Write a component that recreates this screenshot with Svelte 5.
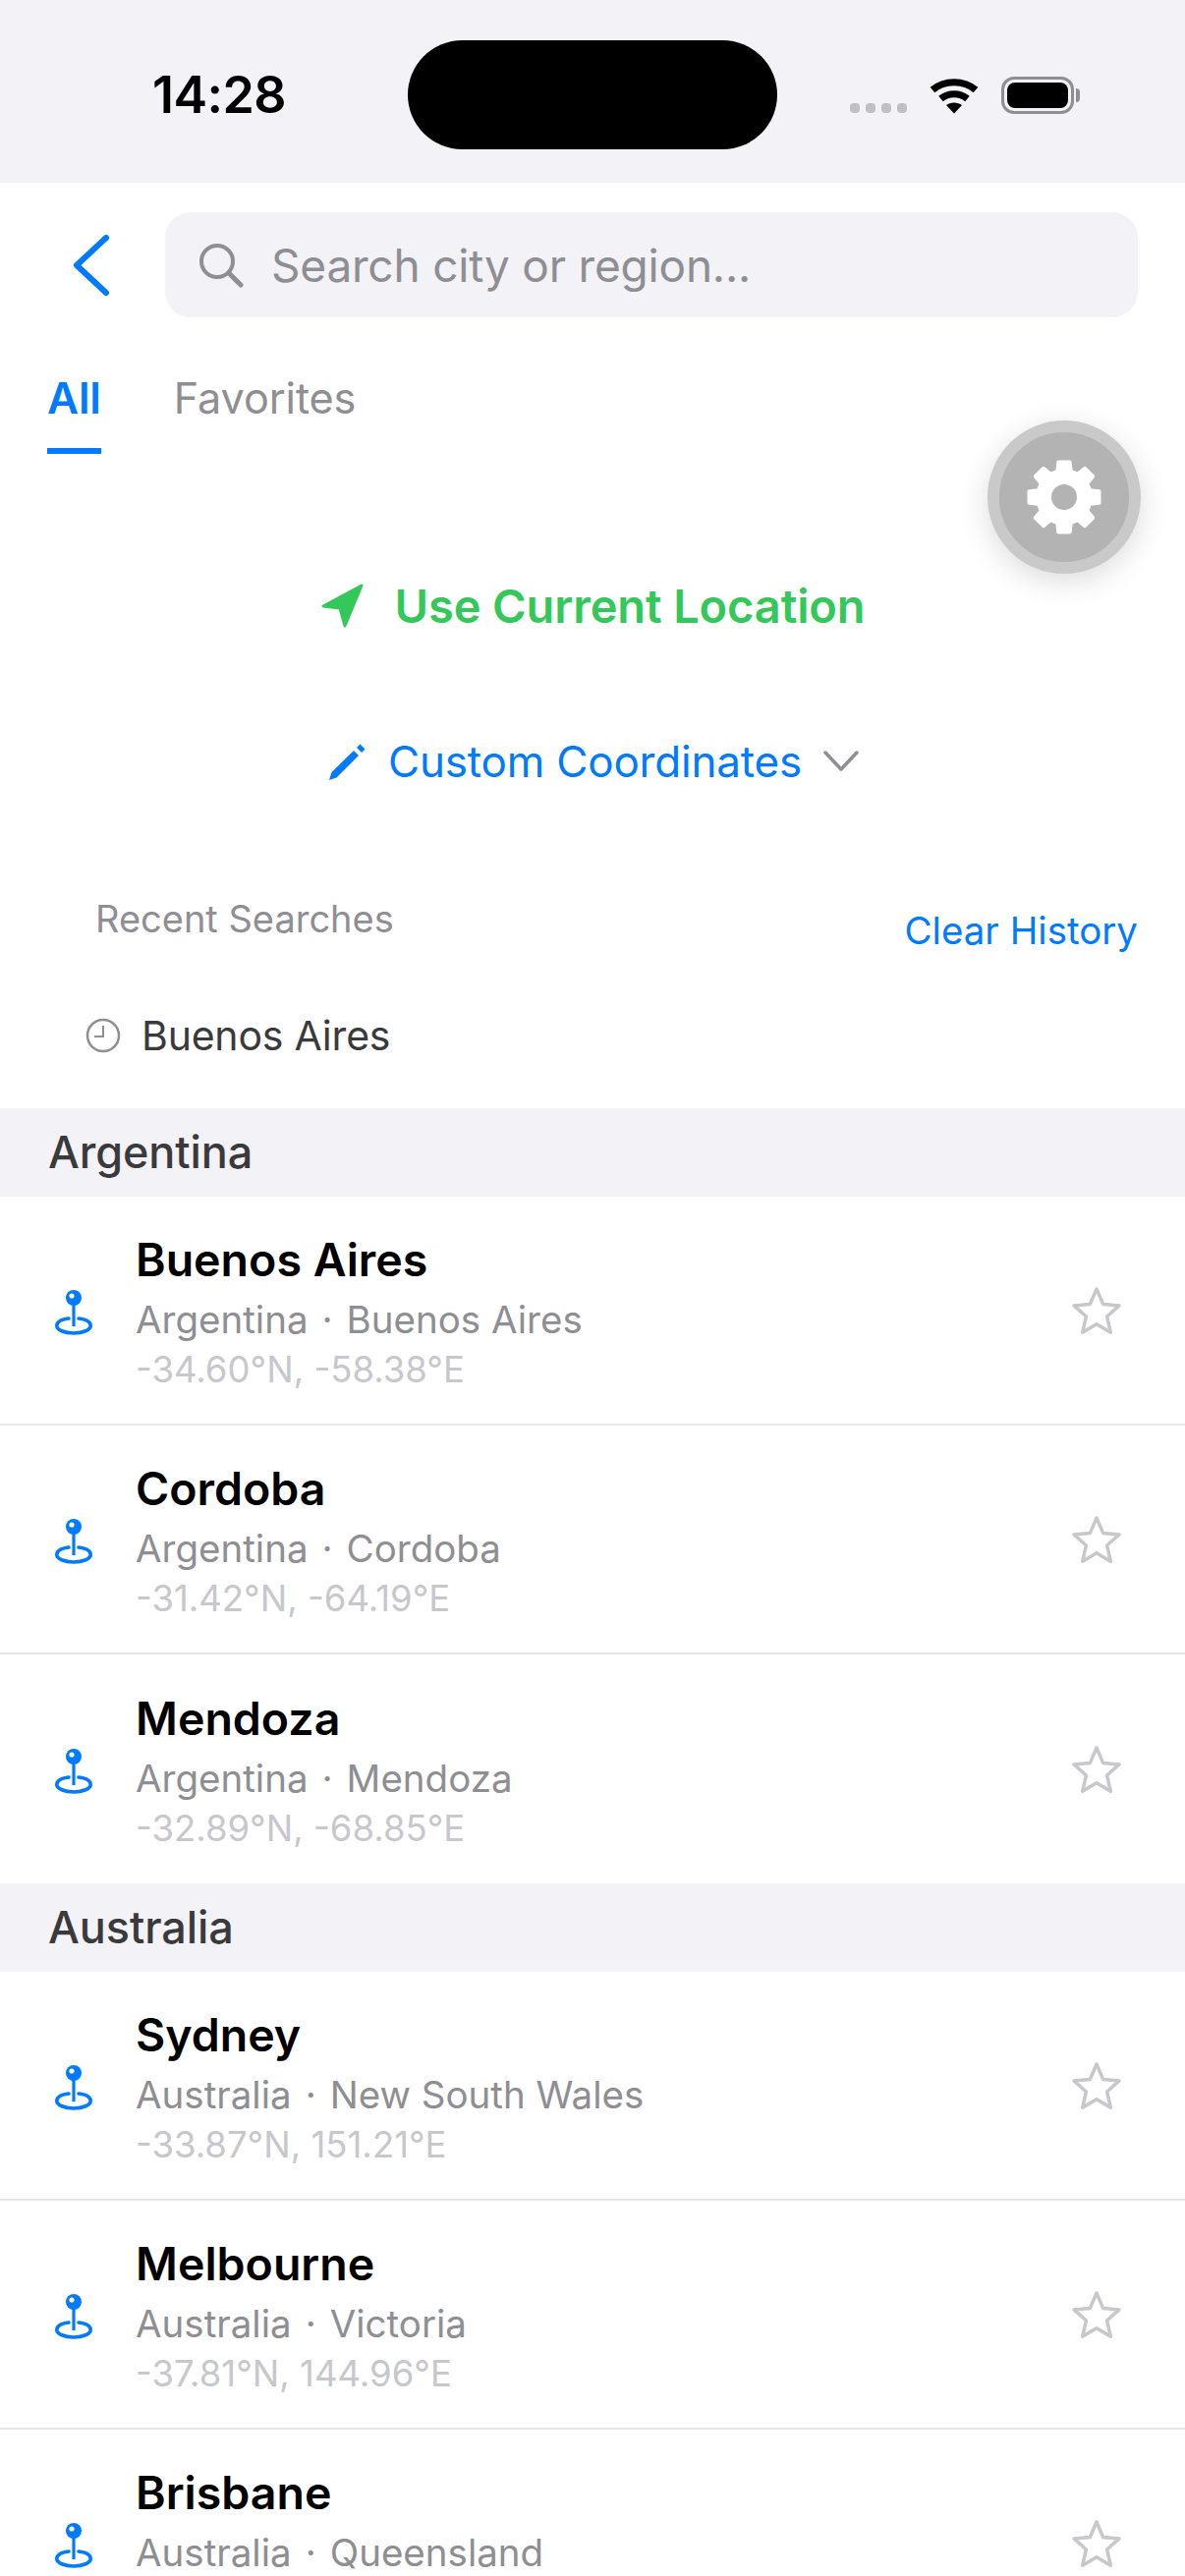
<script>
  const sections = [
    {
      name: 'Argentina',
      cities: [
        { name: 'Buenos Aires', region: 'Buenos Aires', coords: '-34.60°N, -58.38°E' },
        { name: 'Cordoba', region: 'Cordoba', coords: '-31.42°N, -64.19°E' },
        { name: 'Mendoza', region: 'Mendoza', coords: '-32.89°N, -68.85°E' }
      ]
    },
    {
      name: 'Australia',
      cities: [
        { name: 'Sydney', region: 'New South Wales', coords: '-33.87°N, 151.21°E' },
        { name: 'Melbourne', region: 'Victoria', coords: '-37.81°N, 144.96°E' },
        // last row runs off the bottom, its coordinates are not visible
        { name: 'Brisbane', region: 'Queensland' }
      ]
    }
  ];

  // 8 tooth gear, centred on 0,0
  function gearPath() {
    const pts = [];
    for (let i = 0; i < 8; i++) {
      const a = (i * Math.PI) / 4 - Math.PI / 2;
      const spots = [[-0.25, 27], [-0.16, 36], [0.16, 36], [0.25, 27]];
      for (const [d, r] of spots) {
        pts.push((Math.cos(a + d) * r).toFixed(1) + ' ' + (Math.sin(a + d) * r).toFixed(1));
      }
    }
    return 'M' + pts.join('L') + 'Z';
  }
</script>

<div class="screen">
  <header class="status">
    <span class="time">14:28</span>
    <div class="island"></div>
    <div class="status-icons">
      <div class="dots"><i></i><i></i><i></i><i></i></div>
      <svg class="wifi" width="52" height="38" viewBox="0 0 52 38">
        <path d="M4 13.5C16 3 36 3 48 13.5" fill="none" stroke="#000" stroke-width="7" />
        <path d="M12.5 22.5C20 16 32 16 39.5 22.5" fill="none" stroke="#000" stroke-width="7" />
        <path d="M18 29C22 25.5 30 25.5 34 29L26 37.5Z" fill="#000" />
      </svg>
      <div class="battery"><div class="battery-fill"></div></div>
      <div class="battery-nub"></div>
    </div>
  </header>

  <div class="search-row">
    <svg class="back" width="40" height="64" viewBox="0 0 40 64">
      <path d="M36 4L6 32L36 60" fill="none" stroke="#007aff" stroke-width="6" stroke-linecap="round" stroke-linejoin="round" />
    </svg>
    <div class="search">
      <svg width="46" height="46" viewBox="0 0 46 46">
        <circle cx="19" cy="19" r="16" fill="none" stroke="#8e8e93" stroke-width="4" />
        <path d="M31 31L43 43" stroke="#8e8e93" stroke-width="5" stroke-linecap="round" />
      </svg>
      <span>Search city or region...</span>
    </div>
  </div>

  <nav class="tabs">
    <div class="tab active">All</div>
    <div class="tab">Favorites</div>
  </nav>

  <button class="fab" aria-label="Settings">
    <svg width="80" height="80" viewBox="-40 -40 80 80">
      <path d={gearPath()} fill="#fff" stroke="#fff" stroke-width="4" stroke-linejoin="round" />
      <circle r="13" fill="#b3b3b3" />
    </svg>
  </button>

  <div class="use-location">
    <svg width="46" height="46" viewBox="0 0 46 46">
      <path d="M42 3L3 24L20 26L25 44Z" fill="#34c759" stroke="#34c759" stroke-width="3" stroke-linejoin="round" />
    </svg>
    <span>Use Current Location</span>
  </div>

  <div class="custom">
    <svg width="44" height="40" viewBox="0 0 44 40">
      <path d="M5 39L7.5 31L30 9L35 14L12.5 36.5Z" fill="#007aff" />
      <path d="M33 6L36.5 2.5L41.5 7.5L38 11Z" fill="#007aff" />
    </svg>
    <span>Custom Coordinates</span>
    <svg class="chev" width="36" height="22" viewBox="0 0 36 22">
      <path d="M2 2L18 19L34 2" fill="none" stroke="#8e8e93" stroke-width="3.5" stroke-linecap="round" stroke-linejoin="round" />
    </svg>
  </div>

  <div class="recent-head">
    <span class="recent-title">Recent Searches</span>
    <span class="clear">Clear History</span>
  </div>

  <div class="recent-item">
    <svg width="36" height="36" viewBox="0 0 36 36">
      <circle cx="18" cy="18" r="16" fill="none" stroke="#8e8e93" stroke-width="2.5" />
      <path d="M18 8V19H9" fill="none" stroke="#8e8e93" stroke-width="2" />
    </svg>
    <span>Buenos Aires</span>
  </div>

  {#each sections as section}
    <div class="section-head">{section.name}</div>
    {#each section.cities as city}
      <div class="row">
        <svg class="pin" width="38" height="46" viewBox="0 0 38 46">
          <path d="M14 29C6 30 1.8 33 1.8 36.5C1.8 40.5 9.5 44 19 44C28.5 44 36.2 40.5 36.2 36.5C36.2 33 32 30 24 29" fill="none" stroke="#007aff" stroke-width="3.6" stroke-linecap="round" />
          <path d="M19 14V37" stroke="#007aff" stroke-width="3.2" />
          <circle cx="19" cy="8" r="8" fill="#007aff" />
          <circle cx="17" cy="6" r="2.6" fill="#fff" />
        </svg>
        <div class="city">
          <div class="city-name">{city.name}</div>
          <div class="city-region">{section.name}<span class="sep">·</span>{city.region}</div>
          {#if city.coords}
            <div class="city-coords">{city.coords}</div>
          {/if}
        </div>
        <svg class="star" width="52" height="50" viewBox="0 0 52 50">
          <path d="M26 3L32.6 18.4L49 19.9L36.6 31L40.3 47.2L26 38.7L11.7 47.2L15.4 31L3 19.9L19.4 18.4Z" fill="none" stroke="#c7c7cc" stroke-width="3.5" stroke-linejoin="round" />
        </svg>
      </div>
    {/each}
  {/each}
</div>

<style>
  :global(body) {
    margin: 0;
    background: #fff;
  }

  .screen {
    position: relative;
    width: 1206px;
    height: 2622px;
    overflow: hidden;
    background: #fff;
    font-family: Inter, "Liberation Sans", sans-serif;
  }

  .status {
    height: 186px;
    box-sizing: border-box;
    padding-top: 41px;
    background: #f2f2f7;
    display: flex;
    align-items: flex-start;
  }

  .time {
    width: 415px;
    box-sizing: border-box;
    padding: 26px 0 0 155px;
    font-size: 52px;
    line-height: 60px;
    font-weight: 600;
    letter-spacing: -0.6px;
    color: #000;
  }

  .island {
    width: 376px;
    height: 111px;
    border-radius: 56px;
    background: #000;
  }

  .status-icons {
    display: flex;
    align-items: flex-start;
    padding: 37px 0 0 74px;
  }

  .dots {
    display: flex;
    gap: 6px;
    margin: 27px 22px 0 0;
  }

  .dots i {
    width: 10px;
    height: 10px;
    border-radius: 4px;
    background: #c0c0c4;
  }

  .wifi {
    margin-right: 22px;
  }

  .battery {
    width: 74px;
    height: 38px;
    box-sizing: border-box;
    border: 3px solid #8e8e93;
    border-radius: 13px;
    padding: 3px;
  }

  .battery-fill {
    height: 100%;
    border-radius: 8px;
    background: #000;
  }

  .battery-nub {
    width: 4px;
    height: 14px;
    margin: 12px 0 0 2px;
    background: #8e8e93;
    border-radius: 0 4px 4px 0;
  }

  .search-row {
    display: flex;
    align-items: center;
    height: 107px;
    margin-top: 30px;
    padding: 0 48px 0 72px;
  }

  .back {
    width: 40px;
    margin-right: 56px;
  }

  .search {
    flex: 1;
    height: 107px;
    display: flex;
    align-items: center;
    gap: 28px;
    box-sizing: border-box;
    padding-left: 34px;
    border-radius: 26px;
    background: #f2f2f7;
    font-size: 46px;
    color: #8e8e93;
    letter-spacing: -0.2px;
  }

  .tabs {
    display: flex;
    gap: 74px;
    padding: 54px 0 0 48px;
  }

  .tab {
    height: 85px;
    box-sizing: border-box;
    font-size: 43.2px;
    line-height: 56px;
    color: #8e8e93;
    letter-spacing: -0.1px;
  }

  .tab.active {
    font-size: 44px;
    color: #007aff;
    font-weight: 600;
    border-bottom: 6px solid #007aff;
  }

  .fab {
    position: absolute;
    left: 1005px;
    top: 428px;
    width: 156px;
    height: 156px;
    padding: 0;
    display: flex;
    align-items: center;
    justify-content: center;
    box-sizing: border-box;
    border: 12px solid #c9c9c9;
    border-radius: 50%;
    background: #b3b3b3;
    box-shadow: 0 8px 30px rgba(0, 0, 0, 0.14);
  }

  .use-location {
    display: flex;
    align-items: center;
    justify-content: center;
    gap: 30px;
    margin-top: 124px;
    height: 60px;
    font-size: 47px;
    font-weight: 600;
    letter-spacing: -0.13px;
    color: #34c759;
  }

  .custom {
    display: flex;
    align-items: center;
    justify-content: center;
    height: 60px;
    margin-top: 99px;
    padding-right: 2px;
    font-size: 44px;
    letter-spacing: -0.2px;
    color: #007aff;
  }

  .custom span {
    margin: 0 22px 0 21px;
  }

  .recent-head {
    display: flex;
    justify-content: space-between;
    padding: 0 48px 0 97px;
    margin-top: 107px;
    height: 70px;
  }

  .recent-title {
    font-size: 38px;
    line-height: 46px;
    color: #8e8e93;
  }

  .clear {
    margin-top: 12px;
    font-size: 38.5px;
    line-height: 46px;
    color: #007aff;
  }

  .recent-item {
    display: flex;
    align-items: center;
    gap: 21px;
    padding-left: 87px;
    margin-top: 42px;
    height: 60px;
    font-size: 41px;
    letter-spacing: -0.2px;
    color: #3a3a3c;
  }

  .section-head {
    height: 90px;
    margin-top: 44px;
    box-sizing: border-box;
    padding-left: 49px;
    background: #f2f2f7;
    font-size: 45px;
    line-height: 89px;
    font-weight: 500;
    letter-spacing: -0.1px;
    color: #3a3a3c;
  }

  .row + .section-head {
    margin-top: 0;
  }

  .row {
    height: 233px;
    box-sizing: border-box;
    display: flex;
    align-items: center;
    padding: 0 64px 0 56px;
    border-bottom: 2px solid #e5e5ea;
  }

  .row:has(+ .section-head) {
    border-bottom: 0;
  }

  .pin {
    margin-right: 44px;
    margin-top: 5px;
  }

  .city {
    flex: 1;
    min-height: 163px;
    padding-top: 4px;
  }

  .city-name {
    font-size: 46.5px;
    line-height: 56px;
    font-weight: 600;
    color: #000;
  }

  .city-region {
    margin-top: 8px;
    font-size: 38.5px;
    line-height: 50px;
    color: #8e8e93;
  }

  .sep {
    margin: 0 14px;
  }

  .city-coords {
    margin-top: 2px;
    font-size: 36.5px;
    line-height: 48px;
    color: #c7c7cc;
  }
</style>
